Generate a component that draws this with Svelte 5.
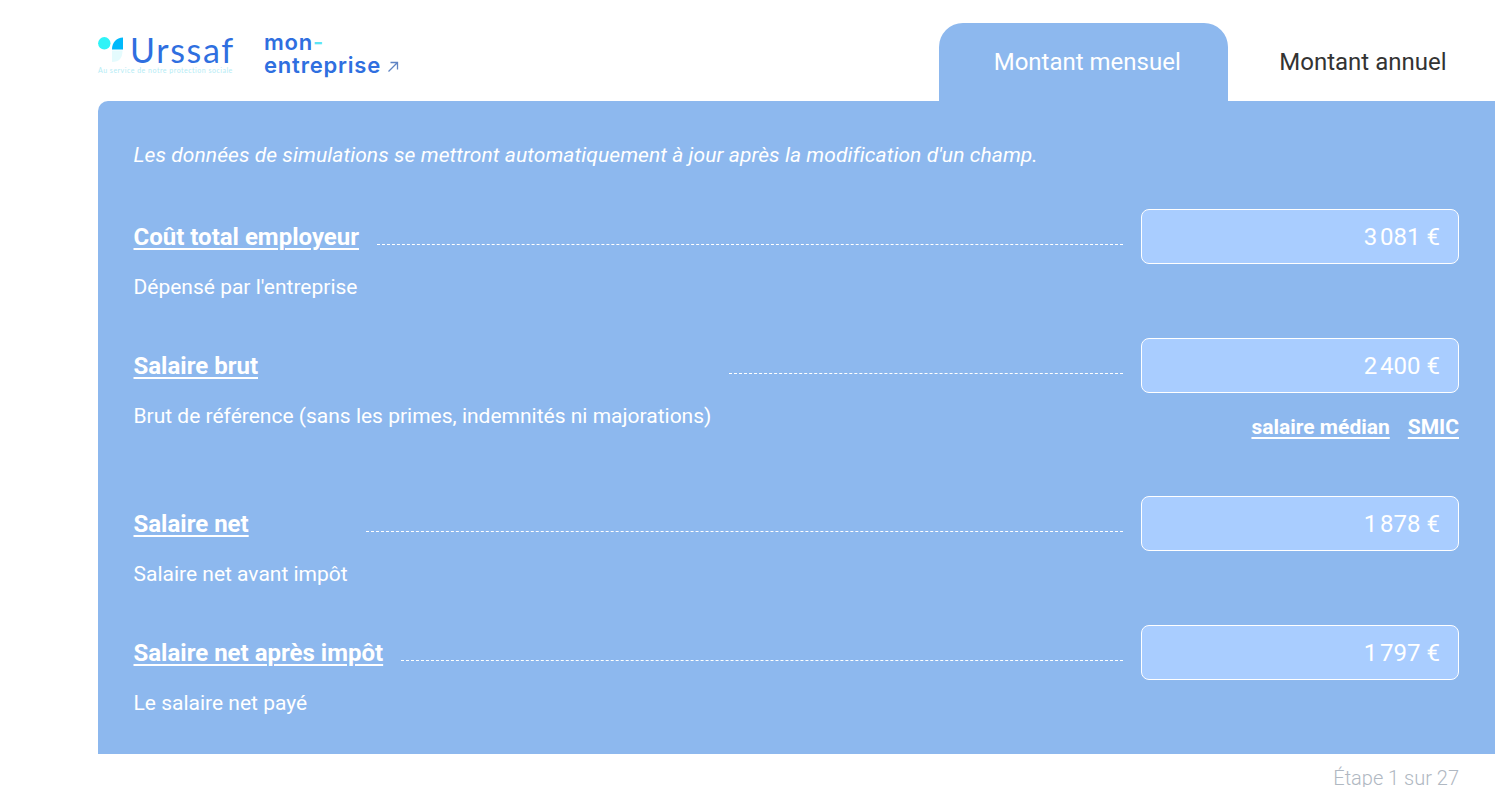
<script>
  const rows = [
    { title: 'Coût total employeur', desc: "Dépensé par l'entreprise", value: '3\u202f081\u00a0€' },
    {
      title: 'Salaire brut',
      desc: 'Brut de référence (sans les primes, indemnités ni majorations)',
      value: '2\u202f400\u00a0€',
      links: ['salaire médian', 'SMIC']
    },
    { title: 'Salaire net', desc: 'Salaire net avant impôt', value: '1\u202f878\u00a0€' },
    { title: 'Salaire net après impôt', desc: 'Le salaire net payé', value: '1\u202f797\u00a0€' }
  ];
</script>

<div class="page">
  <header class="top">
    <div class="logos">
      <div class="urssaf">
        <div class="urssaf-main">
          <svg class="mark" width="26" height="26" viewBox="0 0 26 26" aria-hidden="true">
            <circle cx="6.300" cy="6.300" r="6.200" fill="#2ff3f7" />
            <path d="M14 12.500 Q14 7 17 4 Q20 0.500 25 0.500 V12.500 Z" fill="#00b9fb" />
            <path d="M14 13.500 H24.500 Q24.500 25 14 25 Z" fill="#e4fbfd" />
          </svg>
          <span class="urssaf-name">Urssaf</span>
        </div>
        <span class="urssaf-sub">Au service de notre protection sociale</span>
      </div>
      <a class="mon" href="#top">
        <span><span class="mon-light">mon</span><span class="dash">-</span></span>
        <span class="second">entreprise
          <svg width="12" height="12" viewBox="0 0 12 12" aria-hidden="true">
            <path d="M1.500 10.500 L10.500 1.500 M3.500 1.500 H10.500 V8.500" fill="none" stroke="#5f84c4" stroke-width="1.300" />
          </svg>
        </span>
      </a>
    </div>
    <div class="tabs">
      <button type="button" class="tab on">Montant mensuel</button>
      <button type="button" class="tab">Montant annuel</button>
    </div>
  </header>

  <main class="panel">
    <p class="hint">Les données de simulations se mettront automatiquement à jour après la modification d'un champ.</p>
    {#each rows as row (row.title)}
      <section class="row" class:has-links={row.links}>
        <div class="info">
          <a class="title" href="#top">{row.title}</a>
          <p class="desc">{row.desc}</p>
        </div>
        <div class="line"></div>
        <div class="field">
          <input type="text" value={row.value} aria-label={row.title} />
          {#if row.links}
            <div class="links">
              {#each row.links as link (link)}
                <a href="#top">{link}</a>
              {/each}
            </div>
          {/if}
        </div>
      </section>
    {/each}
  </main>

  <p class="step">Étape 1 sur 27</p>
</div>

<style>
  :global(body) {
    background: #fff;
    overflow: hidden;
  }

  .page {
    height: 787px;
    overflow: hidden;
    padding: 0 12px 0 98px;
    box-sizing: border-box;
    font-family: Roboto, sans-serif;
  }

  .top {
    display: flex;
    justify-content: space-between;
    align-items: flex-end;
    height: 101px;
  }

  .logos {
    display: flex;
    align-self: flex-start;
    gap: 29px;
    padding-top: 33px;
  }

  .urssaf {
    display: flex;
    flex-direction: column;
    width: 137px;
  }

  .urssaf-main {
    display: flex;
    align-items: flex-start;
    gap: 6px;
    height: 34px;
  }

  .mark {
    margin-top: 4px;
  }

  .urssaf-name {
    font-family: Lato, sans-serif;
    font-weight: 400;
    font-size: 34px;
    line-height: 34px;
    color: #2f6fe0;
    letter-spacing: 1.700px;
  }

  .urssaf-sub {
    font-family: Lato, sans-serif;
    font-size: 7px;
    line-height: 7px;
    white-space: nowrap;
    color: #b5ecf5;
    letter-spacing: 0.500px;
  }

  .mon {
    display: flex;
    flex-direction: column;
    margin-top: -2px;
    font-family: Inter, sans-serif;
    font-weight: 600;
    font-size: 22px;
    line-height: 23px;
    letter-spacing: 0.800px;
    color: #2f6fe0;
    text-decoration: none;
  }

  .dash {
    color: #5ce5f5;
  }

  .second {
    white-space: nowrap;
  }

  .tabs {
    display: flex;
  }

  .tab {
    height: 78px;
    padding: 0 48.500px 0 51.500px;
    border: 0;
    border-radius: 24px 24px 0 0;
    background: transparent;
    font-family: Roboto, sans-serif;
    font-size: 24px;
    color: #333;
    cursor: pointer;
  }

  .tab.on {
    padding: 0 47px 0 55px;
    background: #8db8ee;
    color: #fff;
  }

  .panel {
    height: 653px;
    box-sizing: border-box;
    padding: 42px 36px 0 35.500px;
    background: #8db8ee;
    border-radius: 10px 0 0 0;
    color: #fff;
  }

  .hint {
    margin: 0 0 42px;
    font-size: 21px;
    line-height: 24px;
    font-style: italic;
    letter-spacing: 0.075px;
  }

  .row {
    display: flex;
    align-items: flex-start;
    height: 129px;
  }

  .row.has-links {
    height: 158px;
  }

  .info {
    flex: none;
  }

  .title {
    display: block;
    width: fit-content;
    font-size: 24px;
    font-weight: 700;
    line-height: 56px;
    height: 55px;
    color: #fff;
    text-decoration: underline;
    text-decoration-thickness: 2px;
    text-underline-offset: 3px;
  }

  .desc {
    margin: 9px 0 0;
    font-size: 21px;
    line-height: 28px;
  }

  .line {
    flex: 1;
    margin: 35px 18px 0;
    border-top: 1px dashed #fff;
  }

  .field {
    flex: none;
    width: 318px;
  }

  input {
    display: block;
    width: 100%;
    height: 55px;
    box-sizing: border-box;
    padding: 1px 18px 0;
    background: #a9cdff;
    border: 1px solid #fff;
    border-radius: 8px;
    color: #fff;
    font-family: Roboto, sans-serif;
    font-size: 24px;
    text-align: right;
    outline: none;
  }

  .links {
    display: flex;
    justify-content: flex-end;
    gap: 18px;
    margin-top: 22px;
  }

  .links a {
    font-size: 21px;
    font-weight: 700;
    line-height: 24px;
    color: #fff;
    text-decoration-thickness: 2px;
    text-underline-offset: 3px;
  }

  .step {
    margin: 15px 36px 0 0;
    font-size: 20px;
    line-height: 18px;
    font-weight: 300;
    text-align: right;
    color: #b0b8c2;
  }
</style>
